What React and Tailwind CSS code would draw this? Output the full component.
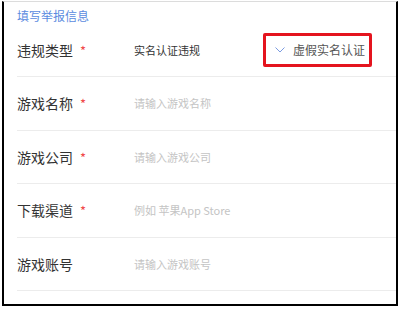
export default function App() {
  const font = { fontFamily: '"Noto Sans CJK SC", "Noto Sans", sans-serif' };
  const Star = () => <span className="ml-[7px] text-[13px] text-[#f04848] leading-none">*</span>;
  const Row = ({ label, star, placeholder, h }) => (
    <div className={`flex items-center border-b border-[#ececec] ${h}`}>
      <div className="w-[117px] flex items-center text-[14px] text-[#333]">
        <span>{label}</span>
        {star && <Star />}
      </div>
      <div className="text-[11px] text-[#c4c4c4]">{placeholder}</div>
    </div>
  );
  return (
    <div className="w-[400px] h-[309px] bg-white relative" style={font}>
      <div className="absolute left-[2px] top-[1px] w-[396px] h-[305px] border-l-2 border-r-2 border-b-2 border-t border-l-black border-r-black border-b-black border-t-[#dcdcdc] flex flex-col">
        <div className="pl-[13px] pt-[6px] h-[23px] text-[12px] leading-[16px] text-[#5b8be0]">填写举报信息</div>
        <div className="ml-[13px] flex flex-col">
          <div className="flex items-center border-b border-[#ececec] h-[52px]">
            <div className="w-[117px] flex items-center text-[14px] text-[#333]">
              <span>违规类型</span>
              <Star />
            </div>
            <div className="text-[11px] text-[#333]">实名认证违规</div>
            <div className="ml-auto mr-[24px] mt-[-2px] w-[109px] h-[34px] border-[3px] border-[#e4141e] rounded-[2px] flex items-center pl-[9px]">
              <svg width="10" height="6" viewBox="0 0 10 6" className="mr-[8px]">
                <polyline points="0.5,0.5 5,5 9.5,0.5" fill="none" stroke="#7b9be0" strokeWidth="1" />
              </svg>
              <span className="text-[12px] text-[#555]">虚假实名认证</span>
            </div>
          </div>
          <Row label="游戏名称" star placeholder="请输入游戏名称" h="h-[54px]" />
          <Row label="游戏公司" star placeholder="请输入游戏公司" h="h-[53px]" />
          <Row label="下载渠道" star placeholder="例如 苹果App Store" h="h-[54px]" />
          <Row label="游戏账号" placeholder="请输入游戏账号" h="h-[53px]" />
        </div>
      </div>
    </div>
  );
}
